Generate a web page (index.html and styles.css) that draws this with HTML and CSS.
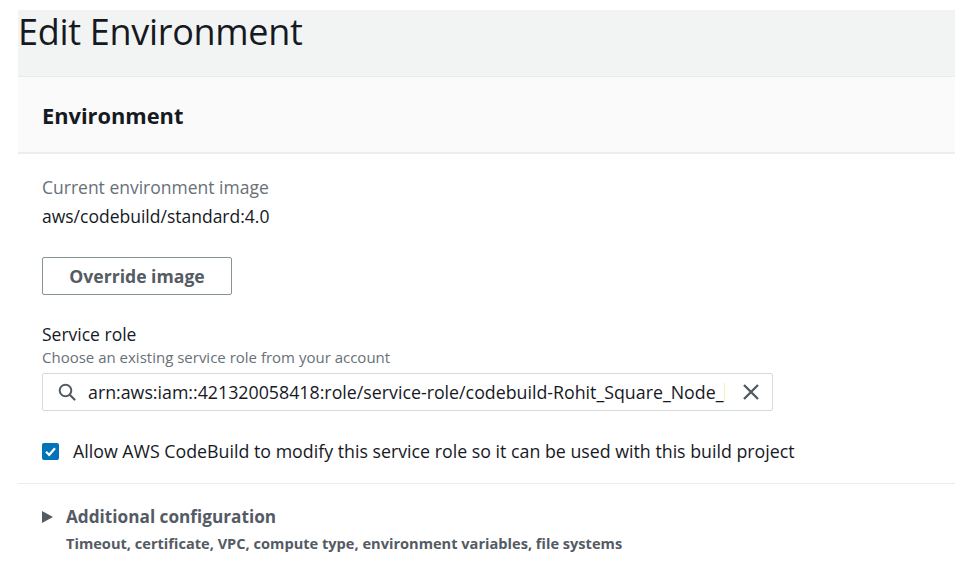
FILE: index.html
```html
<!DOCTYPE html>
<html>
<head>
<meta charset="utf-8">
<link rel="stylesheet" href="styles.css">
</head>
<body>
<div class="page">
  <header class="page-header">
    <h1 class="page-title">Edit Environment</h1>
  </header>
  <section class="panel">
    <div class="panel-header">
      <h2 class="panel-title">Environment</h2>
    </div>
    <div class="panel-body">
      <div class="kv">
        <div class="kv-label">Current environment image</div>
        <div class="kv-value">aws/codebuild/standard:4.0</div>
      </div>
      <button class="btn">Override image</button>
      <div class="form-field">
        <div class="field-label">Service role</div>
        <div class="field-desc">Choose an existing service role from your account</div>
        <div class="search-input">
          <svg class="search-icon" width="18" height="18" viewBox="0 0 18 18"><circle cx="7.5" cy="7.5" r="5.8" fill="none" stroke="#545b64" stroke-width="2"/><path d="M11.7 11.7L16.5 16.5" stroke="#545b64" stroke-width="2.2" stroke-linecap="round"/></svg>
          <span class="input-text">arn:aws:iam::421320058418:role/service-role/codebuild-Rohit_Square_Node_</span>
          <span class="caret-mark"></span>
          <svg class="clear-icon" width="18" height="18" viewBox="0 0 18 18"><path d="M2 2L16 16M16 2L2 16" stroke="#545b64" stroke-width="2.4"/></svg>
        </div>
      </div>
      <label class="checkbox-row">
        <span class="checkbox"><svg width="17" height="17" viewBox="0 0 17 17"><path d="M4 8.8L7.2 11.8L13 5.2" fill="none" stroke="#fff" stroke-width="2.2"/></svg></span>
        <span class="checkbox-text">Allow AWS CodeBuild to modify this service role so it can be used with this build project</span>
      </label>
    </div>
    <div class="expander">
      <div class="expander-head">
        <svg class="caret" width="11" height="12" viewBox="0 0 11 12"><path d="M0 0L11 6L0 12Z" fill="#545b64"/></svg>
        <span class="expander-title">Additional configuration</span>
      </div>
      <div class="expander-desc">Timeout, certificate, VPC, compute type, environment variables, file systems</div>
    </div>
  </section>
</div>
</body>
</html>
```

FILE: styles.css
```css
* { box-sizing: border-box; }
html, body { margin: 0; padding: 0; background: #fff; }
body { font-family: "Open Sans", "Noto Sans", sans-serif; color: #16191f; }

.page { padding: 10px 0 0 18px; }

.page-header {
  background: #f2f3f3;
  height: 67px;
  border-bottom: 1px solid #e9ebeb;
}
.page-title {
  margin: 0;
  font-weight: 400;
  font-size: 36px;
  line-height: 44px;
  letter-spacing: -0.3px;
  color: #16191f;
}

.panel-header {
  background: #fafafa;
  height: 77px;
  border-bottom: 2px solid #eceeee;
  padding: 24px 24px 0 24px;
}
.panel-title {
  margin: 0;
  font-size: 21.8px;
  line-height: 30px;
  font-weight: 700;
  color: #16191f;
}

.panel-body {
  padding: 21px 24px 20px 24px;
  display: flex;
  flex-direction: column;
  align-items: flex-start;
  border-bottom: 1px solid #eaeded;
}

.kv-label { font-size: 17.5px; line-height: 24px; color: #687078; }
.kv-value { font-size: 17.5px; line-height: 24px; margin-top: 5px; color: #16191f; }

.btn {
  margin-top: 29px;
  width: 190px;
  height: 38px;
  background: #fff;
  border: 1px solid #879596;
  border-radius: 2px;
  font-family: inherit;
  font-weight: 700;
  font-size: 17.6px;
  color: #545b64;
  padding: 0;
}

.form-field { margin-top: 27px; display: flex; flex-direction: column; }
.field-label { font-size: 17.5px; line-height: 24px; color: #16191f; }
.field-desc { font-size: 15px; line-height: 22px; color: #687078; }
.search-input {
  margin-top: 5px;
  width: 731px;
  height: 38px;
  border: 1px solid #d5dbdb;
  border-radius: 2px;
  display: flex;
  align-items: center;
  padding: 0 12px 0 15px;
}
.search-icon { flex: none; }
.input-text {
  margin-left: 12px;
  font-size: 17.8px;
  color: #16191f;
  white-space: nowrap;
  flex: none;
}
.caret-mark {
  width: 1px;
  height: 18px;
  margin-left: 1px;
  background: #f3efc4;
  flex: none;
}
.clear-icon { margin-left: auto; flex: none; }

.checkbox-row {
  margin-top: 28px;
  display: flex;
  align-items: center;
}
.checkbox {
  width: 17px;
  height: 17px;
  background: #0073bb;
  border-radius: 2px;
  display: flex;
  flex: none;
}
.checkbox-text { margin-left: 14px; font-size: 17.8px; line-height: 24px; color: #16191f; }

.expander { padding: 21px 24px 20px 24px; }
.expander-head { display: flex; align-items: center; }
.caret { flex: none; }
.expander-title { margin-left: 13px; font-weight: 700; font-size: 17.2px; line-height: 24px; color: #545b64; }
.expander-desc { margin-left: 24px; margin-top: 3px; font-weight: 700; font-size: 14.6px; line-height: 22px; color: #545b64; }
```
